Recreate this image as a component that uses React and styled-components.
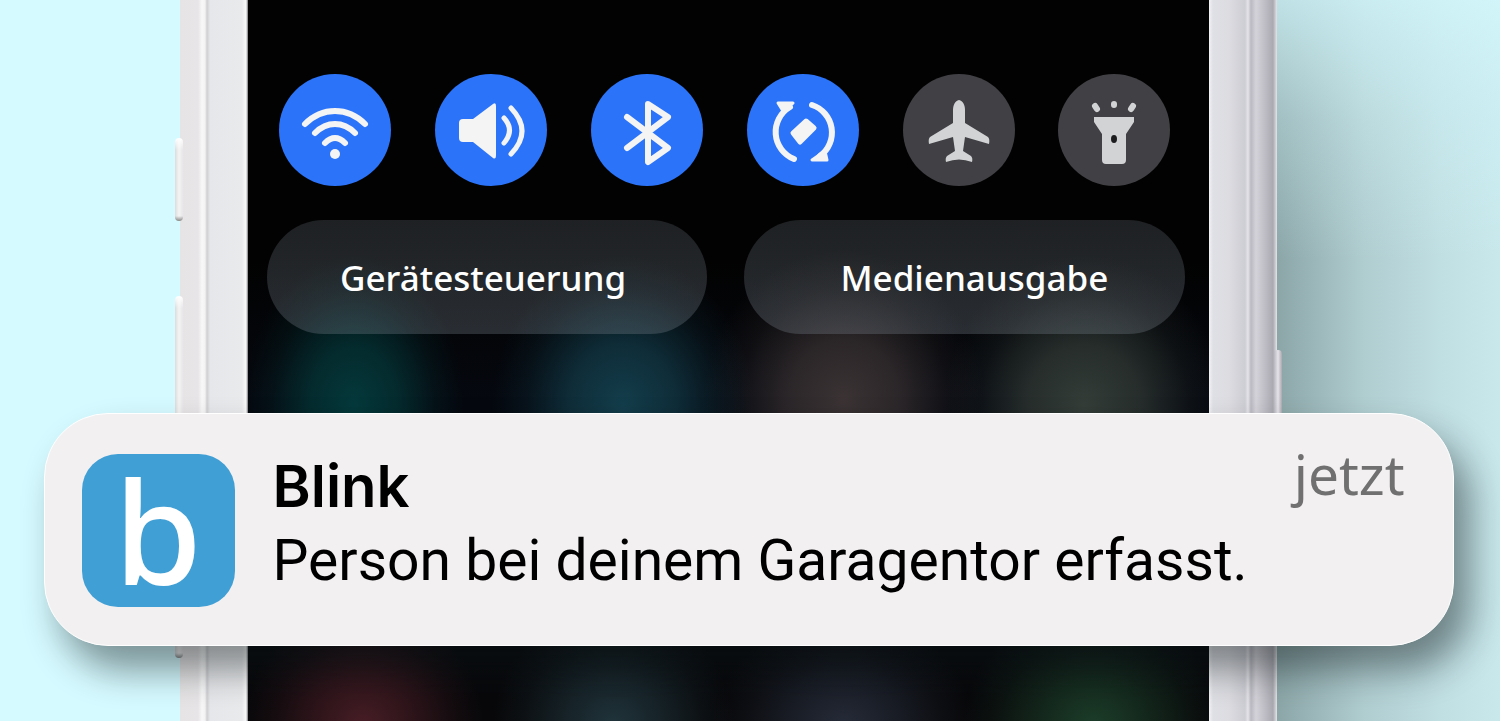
import styled, { createGlobalStyle } from "styled-components";

const App = () => {
    return <>
        <GlobalStyle />
        <Page>
            <Phone>
                <Bezel>
                    <SideKey $top="138px" $height="83px" />
                    <SideKey $top="296px" $height="362px" />
                </Bezel>
                <Screen>
                    <Toggles>
                        {
                            toggles.map(({label, active, Icon}) => (
                                <Toggle key={label} type="button" aria-label={label} aria-pressed={active} $active={active}>
                                    <Icon />
                                </Toggle>
                            ))
                        }
                    </Toggles>
                    <Panels>
                        <Panel type="button" $padding="0 8px 0 0">Gerätesteuerung</Panel>
                        <Panel type="button" $padding="0 0 0 20px">Medienausgabe</Panel>
                    </Panels>
                </Screen>
                <Bezel $right>
                    <SideKey $right $top="350px" $height="120px" />
                </Bezel>
            </Phone>
            <Notification>
                <AppIcon>b</AppIcon>
                <Message>
                    <Title>Blink</Title>
                    <Text>Person bei deinem Garagentor erfasst.</Text>
                </Message>
                <Time>jetzt</Time>
            </Notification>
        </Page>
    </>
}

const WifiIcon = () => (
    <Glyph viewBox="0 0 112 112">
        <g fill="none" stroke="currentColor" strokeWidth="6" strokeLinecap="round">
            <path d="M26 50Q39 37 56 37T86 50" />
            <path d="M36 59Q45 50 56 50T76 59" />
            <path d="M46 69Q51 64 56 64T66 69" />
        </g>
        <circle cx="56" cy="80" r="5" />
    </Glyph>
);

const SoundIcon = () => (
    <Glyph viewBox="0 0 112 112">
        <path d="M28 45H38L58 30Q61 28 61 32V81Q61 86 58 84L38 68H28Q24 68 24 64V49Q24 45 28 45Z" />
        <g fill="none" stroke="currentColor" strokeWidth="5" strokeLinecap="round">
            <path d="M69 44Q80 56 69 69" />
            <path d="M76 34Q98 57 76 80" />
        </g>
    </Glyph>
);

const BluetoothIcon = () => (
    <Glyph viewBox="0 0 112 112">
        <path
            d="M36 43L77 74L57 88V30L77 43L36 74"
            fill="none"
            stroke="currentColor"
            strokeWidth="6"
            strokeLinecap="round"
            strokeLinejoin="round"
        />
    </Glyph>
);

const RotateIcon = () => (
    <Glyph viewBox="0 0 112 112">
        <g stroke="currentColor" strokeLinecap="round" strokeLinejoin="round">
            <path d="M47 85A29 29 0 0 1 43 33" fill="none" strokeWidth="6" />
            <path d="M65 31A29 29 0 0 1 73 82" fill="none" strokeWidth="6" />
            <path d="M31 29H46L36 37Z" strokeWidth="3" />
            <path d="M65 86H80L78 77Z" strokeWidth="3" />
            <path d="M46 59L59 47L67 54L53 68Z" strokeWidth="5" />
        </g>
    </Glyph>
);

const PlaneIcon = () => (
    <Glyph viewBox="0 0 112 112">
        <path d="M56 26C60 27 62 31 62 36V49L85 63Q87 65 86 70L62 63L60 77L68 82Q70 84 69 88Q56 83 43 88Q42 84 44 82L52 77L50 63L26 70Q25 65 27 63L50 49V36C50 31 52 27 56 26Z" />
    </Glyph>
);

const TorchIcon = () => (
    <Glyph viewBox="0 0 112 112">
        <path d="M36 43H76V48L68 60V86Q68 90 64 90H48Q44 90 44 86V60L36 48Z" />
        <ellipse cx="56" cy="65" rx="3" ry="4" fill="#1d1d1f" />
        <path d="M37 32L39 35M56 30V31M75 32L73 35" fill="none" stroke="currentColor" strokeWidth="6" strokeLinecap="round" />
    </Glyph>
);

const toggles = [
    {label: "WLAN", active: true, Icon: WifiIcon},
    {label: "Ton", active: true, Icon: SoundIcon},
    {label: "Bluetooth", active: true, Icon: BluetoothIcon},
    {label: "Automatisch drehen", active: true, Icon: RotateIcon},
    {label: "Flugmodus", active: false, Icon: PlaneIcon},
    {label: "Taschenlampe", active: false, Icon: TorchIcon},
];

const GlobalStyle = createGlobalStyle`
    *{
        box-sizing: border-box;
    }

    body{
        margin: 0;
    }
`;

const Page = styled.main`
    display: grid;
    min-height: 100vh;
    overflow: hidden;
    background:
        linear-gradient(rgba(213, 250, 255, 0.7), rgba(213, 250, 255, 0.3) 120px, rgba(213, 250, 255, 0) 260px),
        linear-gradient(90deg, #d5faff 0 80%, #8ba5a7 85%, #b0cdd0 91%, #c0dfe3 96%, #c8e8ec);
`;

const Phone = styled.div`
    grid-area: 1 / 1;
    display: grid;
    grid-template-columns: 68px 1fr 68px;
    width: 73.1%;
    margin-left: 12%;
`;

const Bezel = styled.div`
    position: relative;
    background: ${(props) => props.$right
        ? "linear-gradient(90deg, #f3f3f5, #dfe0e5 4px, #dcdce1 20px, #cdcdd4 36px, #e5e4e9 39px, #bab9c1 42px, #d5d3da 47px, #aaa9b1 64px, #e5e4e8)"
        : "linear-gradient(90deg, #e6e4e5, #e7e5e7 18px, #f8f8f8 22px, #f3f3f4 25px, #cfcfd2 27px, #e6e7ea 30px, #e9eaec 62px, #fafafa 66px, #77777a)"};
`;

const SideKey = styled.span`
    position: absolute;
    top: ${(props) => props.$top};
    ${(props) => props.$right ? "right" : "left"}: -5px;
    width: 8px;
    height: ${(props) => props.$height};
    border-radius: 4px;
    background: ${(props) => props.$right
        ? "linear-gradient(90deg, #b8b7bf, #e6e4ea 4px, #aaa8b0)"
        : "linear-gradient(#fff, transparent 12px, transparent calc(100% - 5px), #888), linear-gradient(90deg, #dcdcdd, #f5f4f5 4px, #e7e5e7)"};
`;

const Screen = styled.div`
    display: flex;
    flex-direction: column;
    gap: 34px;
    padding-top: 74px;
    background:
        radial-gradient(ellipse 110px 150px at 11% 405px, #04393b, rgba(4, 57, 59, 0.7) 40%, rgba(4, 57, 59, 0.2) 75%, transparent),
        radial-gradient(ellipse 130px 150px at 39% 405px, #133d4b, rgba(19, 61, 75, 0.7) 40%, rgba(19, 61, 75, 0.2) 75%, transparent),
        radial-gradient(ellipse 140px 150px at 62% 400px, #3b3334, rgba(59, 51, 52, 0.7) 40%, rgba(59, 51, 52, 0.2) 75%, transparent),
        radial-gradient(ellipse 140px 150px at 87% 405px, #343d38, rgba(52, 61, 56, 0.7) 40%, rgba(52, 61, 56, 0.2) 75%, transparent),
        radial-gradient(ellipse 120px 120px at 12% 725px, #471d25, rgba(71, 29, 37, 0.6) 40%, rgba(71, 29, 37, 0.2) 75%, transparent),
        radial-gradient(ellipse 120px 120px at 38% 725px, #20343b, rgba(32, 52, 59, 0.6) 40%, rgba(32, 52, 59, 0.2) 75%, transparent),
        radial-gradient(ellipse 130px 110px at 62% 725px, #252b38, rgba(37, 43, 56, 0.6) 40%, rgba(37, 43, 56, 0.2) 75%, transparent),
        radial-gradient(ellipse 130px 120px at 88% 725px, #1c3d29, rgba(28, 61, 41, 0.6) 40%, rgba(28, 61, 41, 0.2) 75%, transparent),
        linear-gradient(#020202 260px, #05080f 400px, #08080a);
`;

const Toggles = styled.div`
    display: flex;
    justify-content: space-between;
    padding: 0 38px 0 31px;
`;

const Toggle = styled.button`
    width: 112px;
    height: 112px;
    padding: 0;
    border: none;
    border-radius: 50%;
    cursor: pointer;
    color: ${(props) => props.$active ? "#f4f4f4" : "#d2d3d5"};
    background: ${(props) => props.$active ? "#2b74fa" : "#414145"};
`;

const Glyph = styled.svg`
    display: block;
    width: 100%;
    fill: currentColor;
`;

const Panels = styled.div`
    display: grid;
    grid-template-columns: 1fr 1fr;
    gap: 37px;
    padding: 0 24px 0 19px;
`;

const Panel = styled.button`
    height: 114px;
    padding: ${(props) => props.$padding};
    border: none;
    border-radius: 57px;
    cursor: pointer;
    color: #fff;
    background: linear-gradient(rgba(120, 130, 140, 0.24), rgba(120, 130, 140, 0.32));
    font-family: "Noto Sans", sans-serif;
    font-size: 35px;
    font-weight: 500;
`;

const Notification = styled.section`
    grid-area: 1 / 1;
    align-self: start;
    z-index: 1;
    display: flex;
    align-items: flex-start;
    margin: 413px 3.1% 0 2.9%;
    padding: 40px 48px 38px 37px;
    border: 1px solid #fff;
    border-radius: 64px;
    background: #f3f0f1;
    box-shadow: 16px 24px 36px rgba(10, 20, 22, 0.45);
`;

const AppIcon = styled.div`
    display: flex;
    align-items: center;
    justify-content: center;
    flex-shrink: 0;
    width: 153px;
    height: 153px;
    margin-right: 38px;
    border-radius: 36px;
    background: #409fd5;
    color: #fff;
    font-family: "Noto Sans", sans-serif;
    font-size: 142px;
    font-weight: 500;
    line-height: 149px;
`;

const Message = styled.div`
    flex: 1;
    color: #000;
    white-space: nowrap;
`;

const Title = styled.h1`
    margin: 0;
    font-family: Inter, sans-serif;
    font-size: 58px;
    font-weight: 600;
    line-height: 64px;
`;

const Text = styled.p`
    margin: 0;
    font-family: Roboto, sans-serif;
    font-size: 57px;
    line-height: 86px;
`;

const Time = styled.time`
    color: #707070;
    font-family: "Noto Sans", sans-serif;
    font-size: 55px;
    line-height: 40px;
`;

export default App;
